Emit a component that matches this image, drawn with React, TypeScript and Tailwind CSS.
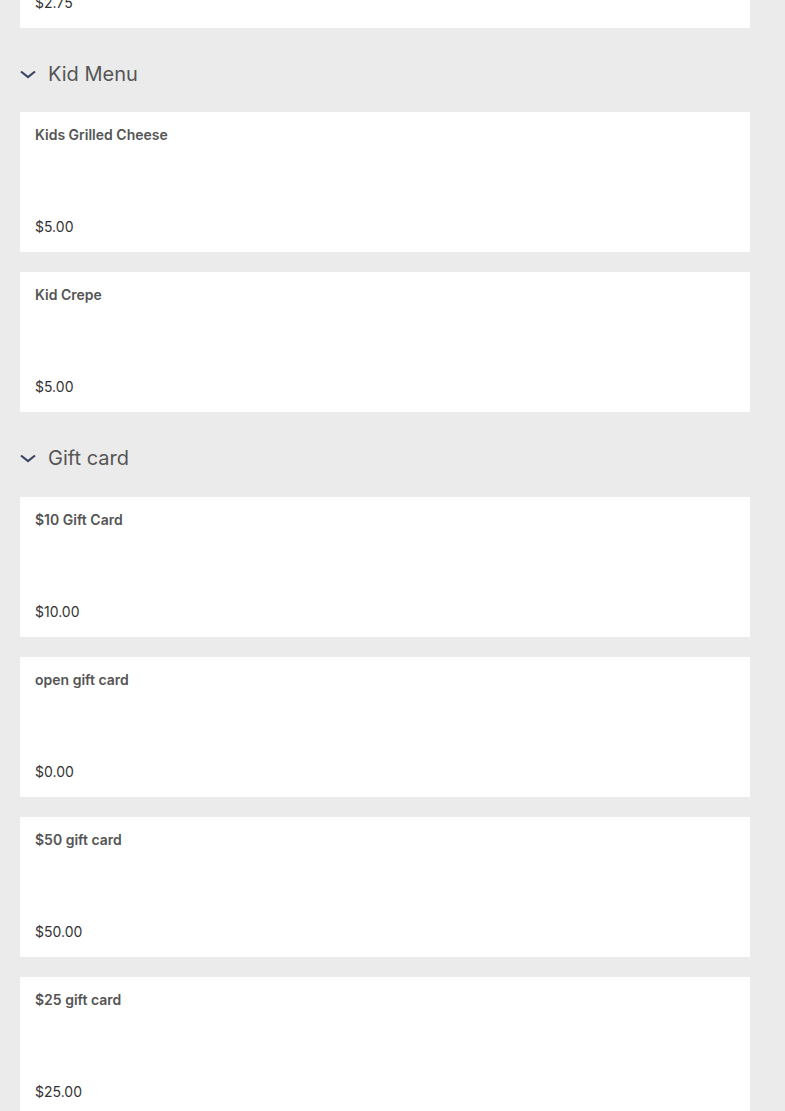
const font = { fontFamily: "Inter, 'Open Sans', sans-serif" };

type Item = { name: string; price: string };

const kidMenu: Item[] = [
  { name: "Kids Grilled Cheese", price: "$5.00" },
  { name: "Kid Crepe", price: "$5.00" },
];

const giftCards: Item[] = [
  { name: "$10 Gift Card", price: "$10.00" },
  { name: "open gift card", price: "$0.00" },
  { name: "$50 gift card", price: "$50.00" },
  { name: "$25 gift card", price: "$25.00" },
];

function ItemCard({ item, className = "" }: { item: Item; className?: string }) {
  return (
    <div
      className={`flex h-[140px] flex-col justify-between bg-white px-[15px] pt-[13px] pb-[15px] ${className}`}
    >
      <p className="text-[14px] leading-5 font-semibold text-[#555]">{item.name}</p>
      <p className="text-[14px] leading-5 text-[#333]">{item.price}</p>
    </div>
  );
}

function SectionHeader({ title, className = "" }: { title: string; className?: string }) {
  return (
    <div className={`flex items-center gap-3 pt-[34px] ${className}`}>
      <svg width="16" height="10" viewBox="0 0 16 10" fill="none">
        <path d="M1 2.5l7 5.5 7-5.5" stroke="#3b4466" strokeWidth="2.2" />
      </svg>
      <h2 className="text-[20px] leading-6 font-normal text-[#555]">{title}</h2>
    </div>
  );
}

export default function App() {
  return (
    <div className="min-h-screen overflow-hidden bg-[#ebebeb] px-5" style={font}>
      <div className="w-[730px]">
        <ItemCard item={{ name: "", price: "$2.75" }} className="-mt-[112px]" />

        <SectionHeader title="Kid Menu" className="pb-[26px]" />
        <div className="flex flex-col gap-5">
          {kidMenu.map((item) => (
            <ItemCard key={item.name} item={item} />
          ))}
        </div>

        <SectionHeader title="Gift card" className="pb-[27px]" />
        <div className="flex flex-col gap-5 pb-5">
          {giftCards.map((item) => (
            <ItemCard key={item.name} item={item} />
          ))}
        </div>
      </div>
    </div>
  );
}
